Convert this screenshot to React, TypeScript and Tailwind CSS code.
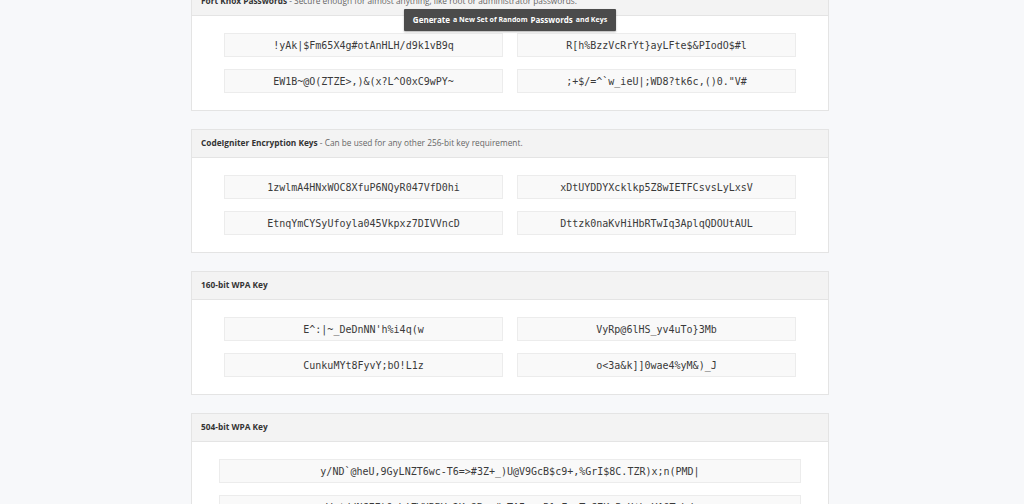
import React from "react";

type Panel = {
  title: string;
  desc?: string;
  keys: string[];
  single?: boolean;
};

const panels: Panel[] = [
  {
    title: "Fort Knox Passwords",
    desc: "Secure enough for almost anything, like root or administrator passwords.",
    keys: [
      "!yAk|$Fm65X4g#otAnHLH/d9k1vB9q",
      "R[h%BzzVcRrYt}ayLFte$&PIodO$#l",
      "EW1B~@O(ZTZE>,)&(x?L^O0xC9wPY~",
      ";+$/=^`w_ieU|;WD8?tk6c,()0.\"V#",
    ],
  },
  {
    title: "CodeIgniter Encryption Keys",
    desc: "Can be used for any other 256-bit key requirement.",
    keys: [
      "1zwlmA4HNxWOC8XfuP6NQyR047VfD0hi",
      "xDtUYDDYXcklkp5Z8wIETFCsvsLyLxsV",
      "EtnqYmCYSyUfoyla045Vkpxz7DIVVncD",
      "Dttzk0naKvHiHbRTwIq3AplqQDOUtAUL",
    ],
  },
  {
    title: "160-bit WPA Key",
    keys: [
      "E^:|~_DeDnNN'h%i4q(w",
      "VyRp@6lHS_yv4uTo}3Mb",
      "CunkuMYt8FyvY;bO!L1z",
      "o<3a&k]]0wae4%yM&)_J",
    ],
  },
  {
    title: "504-bit WPA Key",
    single: true,
    keys: [
      "y/ND`@heU,9GyLNZT6wc-T6=>#3Z+_)U@V9GcB$c9+,%GrI$8C.TZR)x;n(PMD|",
      "W:$d/NCFF)Q<h!ZWHRBV-2K=?Bw;#oTAI@z+P]>Fr-ToS7K:P<U$h:Y^QTp\\d",
    ],
  },
];

const mono = { fontFamily: '"DejaVu Sans Mono", "Liberation Mono", monospace' };

function KeyBox({ text }: { text: string }) {
  return (
    <div
      className="h-[24px] bg-[#f9f9f9] border border-[#ececec] flex items-center justify-center text-[10px] text-[#3a3a3a] whitespace-pre"
      style={mono}
    >
      {text}
    </div>
  );
}

function PanelView({ p }: { p: Panel }) {
  return (
    <div className="bg-white border border-[#e4e4e4]">
      <div className="h-[28px] bg-[#f3f3f3] border-b border-[#e4e4e4] px-[9px] flex items-center text-[8.3px] text-[#333]">
        <span className="font-bold">{p.title}</span>
        {p.desc && <span className="text-[#666] whitespace-pre"> - {p.desc}</span>}
      </div>
      {p.single ? (
        <div className="px-[27px] pt-[17px] pb-[17px] flex flex-col gap-[12px]">
          {p.keys.map((k, i) => (
            <KeyBox key={i} text={k} />
          ))}
        </div>
      ) : (
        <div className="px-[32px] pt-[17px] pb-[17px] grid grid-cols-2 gap-x-[14px] gap-y-[12px]">
          {p.keys.map((k, i) => (
            <KeyBox key={i} text={k} />
          ))}
        </div>
      )}
    </div>
  );
}

export default function App() {
  return (
    <div
      className="relative h-[504px] w-[1024px] overflow-hidden bg-[#f7f8fa]"
      style={{ fontFamily: '"Open Sans", "Noto Sans", Arial, sans-serif' }}
    >
      <div className="w-[638px] ml-[191px] -mt-[13px] flex flex-col gap-[18px]">
        {panels.map((p, i) => (
          <PanelView key={i} p={p} />
        ))}
      </div>
      <div className="absolute left-[404px] top-[9px] w-[212px] h-[22px] bg-[#4b4b4b] rounded-[1px] shadow-[0_1px_2px_rgba(0,0,0,0.3)] flex items-center justify-center gap-[3px] text-white font-bold whitespace-nowrap">
        <span className="text-[8px]">Generate</span>
        <span className="text-[7px]">a New Set of Random</span>
        <span className="text-[8px]">Passwords</span>
        <span className="text-[7px]">and Keys</span>
      </div>
    </div>
  );
}
